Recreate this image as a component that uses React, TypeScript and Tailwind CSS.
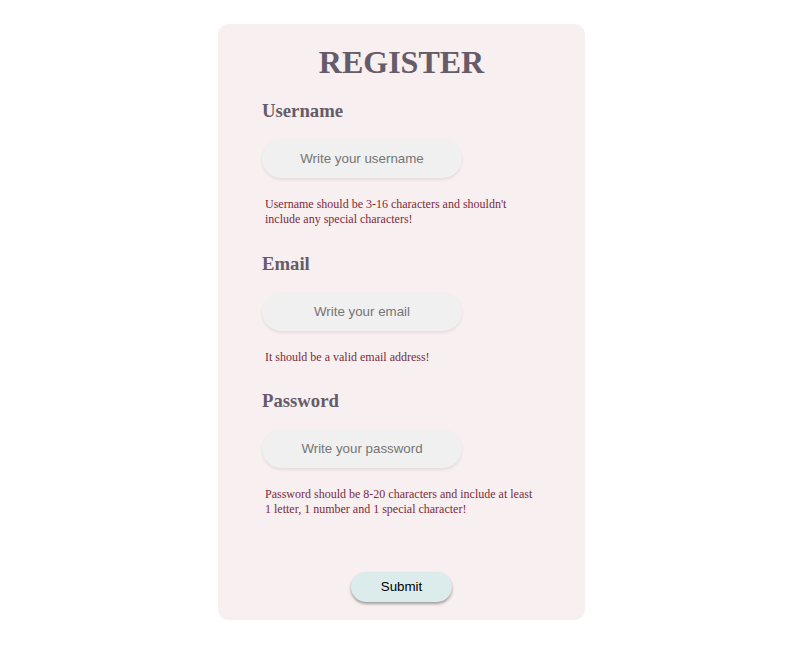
import React, { useState } from 'react'

type Field = {
  name: string
  label: string
  type: string
  placeholder: string
  error: string
  gap: string
}

const fields: Field[] = [
  {
    name: 'username',
    label: 'Username',
    type: 'text',
    placeholder: 'Write your username',
    error: "Username should be 3-16 characters and shouldn't include any special characters!",
    gap: '',
  },
  {
    name: 'email',
    label: 'Email',
    type: 'email',
    placeholder: 'Write your email',
    error: 'It should be a valid email address!',
    gap: 'mt-[26px]',
  },
  {
    name: 'password',
    label: 'Password',
    type: 'password',
    placeholder: 'Write your password',
    error: 'Password should be 8-20 characters and include at least 1 letter, 1 number and 1 special character!',
    gap: 'mt-[25px]',
  },
]

const serif = { fontFamily: '"Liberation Serif", "Times New Roman", serif' }

export default function App() {
  const [values, setValues] = useState<Record<string, string>>({ username: '', email: '', password: '' })

  return (
    <div className="min-h-screen bg-white pt-[24px] pr-[4px] flex justify-center" style={serif}>
      <form
        className="w-[367px] h-[596px] bg-[#f8eff0] rounded-[10px] pt-[20px] pb-[18px] flex flex-col"
        onSubmit={e => e.preventDefault()}
      >
        <h1 className="text-[32px] leading-[37px] font-bold text-center text-[#665b68]">REGISTER</h1>

        <div className="flex flex-col pl-[44px] mt-[19px]">
          {fields.map(f => (
            <div key={f.name} className={`flex flex-col items-start ${f.gap}`}>
              <label className="text-[18.72px] leading-[22px] font-bold text-[#665b68]">{f.label}</label>
              <input
                type={f.type}
                name={f.name}
                value={values[f.name]}
                onChange={e => setValues({ ...values, [f.name]: e.target.value })}
                placeholder={f.placeholder}
                className="mt-[17px] w-[200px] h-[39px] rounded-full bg-[#f0f0f0] text-center text-[13.33px] text-[#333] placeholder:text-[#757575] outline-none shadow-[0_2px_3px_rgba(0,0,0,0.08)]"
                style={{ fontFamily: '"Liberation Sans", Arial, sans-serif' }}
              />
              <span className="mt-[19px] pl-[3px] w-[276px] text-[12px] leading-[15px] text-[#7a2c3d]">{f.error}</span>
            </div>
          ))}
        </div>

        <div className="flex justify-center mt-auto">
          <button
            type="submit"
            className="w-[101px] h-[30px] rounded-full bg-[#dcecec] text-[13.33px] text-black shadow-[0_2px_3px_rgba(0,0,0,0.35)]"
            style={{ fontFamily: '"Liberation Sans", Arial, sans-serif' }}
          >
            Submit
          </button>
        </div>
      </form>
    </div>
  )
}
